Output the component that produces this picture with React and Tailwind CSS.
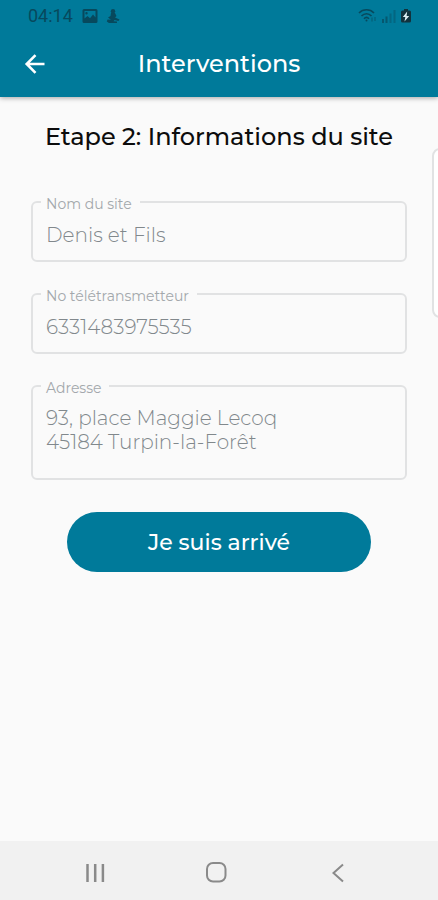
import React from "react";

const SITE = {
  name: "Denis et Fils",
  transmitter: "6331483975535",
  address: "93, place Maggie Lecoq\n45184 Turpin-la-Forêt",
};

const StatusBar = () => (
  <div className="flex h-8 items-center justify-between pl-7 pr-6 text-[#07495d]">
    <div className="flex items-center gap-2">
      <span className="font-[Roboto,sans-serif] text-lg">04:14</span>
      {/* Picture notification */}
      <svg width="16" height="14" viewBox="0 0 16 14" className="ml-px" aria-hidden="true">
        <path
          fill="currentColor"
          fillRule="evenodd"
          d="M2 0h12A1.500 1.500 0 0 1 15.500 1.500v11a1.500 1.500 0 0 1-1.500 1.500H2A1.500 1.500 0 0 1 .5 12.500v-11A1.500 1.500 0 0 1 2 0ZM2.500 2v7.500l3-2.500 2.500 2.200 3-3.700 2.500 3V2h-11ZM4.500 3a1.200 1.200 0 1 1 0 2.400 1.200 1.200 0 0 1 0-2.400Z"
        />
      </svg>
      {/* Service notification */}
      <svg width="14" height="14" viewBox="0 0 14 14" aria-hidden="true">
        <g fill="currentColor">
          <circle cx="7" cy="2.200" r="2.200" />
          <path d="M5 4h4l1.500 3L9 8.500l4.500 2-1 1.500-4-1-1 1.200 3.500.3v1.500H3L.8 12.500 1.500 10.500l3.500.3L2 8.500 4.500 7Z" />
        </g>
      </svg>
    </div>
    <div className="flex items-center gap-1">
      {/* Wi-Fi */}
      <svg width="20" height="16" viewBox="0 0 20 16" fill="none" stroke="currentColor" strokeWidth="1.600" aria-hidden="true">
        <path d="M1 5c4-4.300 11-4.300 15 0M3.500 8c2.800-3 7.200-3 10 0M6 10.700c1.500-1.500 3.500-1.500 5 0" />
        <circle cx="8.500" cy="12.500" r="1" fill="currentColor" stroke="none" />
        <path d="M14 9.500v4M17 9v4" strokeWidth="1.400" opacity=".5" />
      </svg>
      {/* Mobile signal */}
      <svg width="14" height="14" viewBox="0 0 14 14" fill="currentColor" aria-hidden="true">
        <path d="M0 10h2v4H0zM3.500 7.500h2V14h-2z" opacity=".7" />
        <path d="M7.500 4.500h2V14h-2zM11.500 1h2v13h-2z" opacity=".4" />
      </svg>
      {/* Battery */}
      <svg width="14" height="16" viewBox="0 0 14 16" aria-hidden="true">
        <path fill="#12323d" d="M4 1h4v1.500h1.500A1.500 1.500 0 0 1 11 4v9a1.500 1.500 0 0 1-1.500 1.500h-7A1.500 1.500 0 0 1 1 13V4a1.500 1.500 0 0 1 1.500-1.500H4Z" />
        <path fill="#dceef3" d="M7.200 3.500 2.800 9h2.500l-.8 4.500L9.200 8H6.600Z" />
      </svg>
    </div>
  </div>
);

const Field = ({ id, label, children }) => (
  <fieldset className="min-w-0 rounded-md border-2 border-[#e1e2e3] px-2">
    <legend className="h-4 pl-[5px] pr-2 text-sm leading-5 text-[#a3a8ac]">
      <label htmlFor={id}>{label}</label>
    </legend>
    {children}
  </fieldset>
);

const SystemNav = () => (
  <nav className="mt-auto flex h-[59px] items-center justify-around bg-[#f1f1f1] pt-1 pl-9 pr-10 text-[#8a8a8a]">
    <button type="button" aria-label="Applications récentes" className="p-2">
      <svg width="20" height="20" viewBox="0 0 20 20" fill="none" stroke="currentColor" strokeWidth="2.500">
        <path d="M1.500 1v18M9.200 1v18M16.900 1v18" />
      </svg>
    </button>
    <button type="button" aria-label="Accueil" className="p-2">
      <svg width="22" height="22" viewBox="0 0 22 22" fill="none" stroke="currentColor" strokeWidth="2">
        <rect x="1" y="1" width="18.500" height="18.500" rx="6" />
      </svg>
    </button>
    <button type="button" aria-label="Retour" className="p-2">
      <svg width="20" height="20" viewBox="0 0 20 20" fill="none" stroke="currentColor" strokeWidth="2">
        <path d="M15 1.500 5.500 10l9.500 8.500" />
      </svg>
    </button>
  </nav>
);

const App = () => {
  return (
    <div className="relative flex min-h-screen flex-col overflow-x-hidden bg-[#fafafa] font-[Montserrat,Inter,sans-serif]">
      <header className="bg-[#007a9a] shadow-[0_1px_5px_rgba(0,0,0,0.35)]">
        <StatusBar />
        <div className="grid h-[65px] grid-cols-[1fr_auto_1fr] items-center px-4 pb-0.5 text-white">
          <button type="button" aria-label="Retour" className="justify-self-start p-2">
            <svg width="22" height="20" viewBox="0 0 22 20" fill="none" stroke="currentColor" strokeWidth="2.600">
              <path d="M20.500 10H3M11.500 1.200 2.700 10l8.800 8.800" />
            </svg>
          </button>
          <h1 className="text-2xl font-medium">Interventions</h1>
        </div>
      </header>

      <main className="px-[31px] pt-6">
        <h2 className="text-center text-2xl leading-8 font-medium text-[#0c0c0c]">Etape 2: Informations du site</h2>

        <form className="mt-[41px] flex flex-col gap-6">
          <Field id="site-name" label="Nom du site">
            <input
              id="site-name"
              readOnly
              defaultValue={SITE.name}
              className="block h-[50px] w-full bg-transparent px-[5px] text-xl font-light text-[#81888c] outline-none"
            />
          </Field>
          <Field id="transmitter" label="No télétransmetteur">
            <input
              id="transmitter"
              readOnly
              defaultValue={SITE.transmitter}
              className="block h-[50px] w-full bg-transparent px-[5px] text-xl font-light text-[#81888c] outline-none"
            />
          </Field>
          <Field id="address" label="Adresse">
            <textarea
              id="address"
              rows={3}
              readOnly
              defaultValue={SITE.address}
              className="block w-full resize-none bg-transparent px-[5px] pt-3 text-xl leading-6 font-light text-[#81888c] outline-none"
            />
          </Field>
          <button type="button" className="mx-9 mt-2 h-[60px] rounded-full bg-[#007a9a] text-[22px] font-medium text-white">
            Je suis arrivé
          </button>
        </form>
      </main>

      {/* Edge panel handle */}
      <div className="absolute top-[148px] -right-2 h-[170px] w-[14px] rounded-l-lg border-2 border-[#e1e2e3] bg-white" />

      <SystemNav />
    </div>
  );
};

export default App;
